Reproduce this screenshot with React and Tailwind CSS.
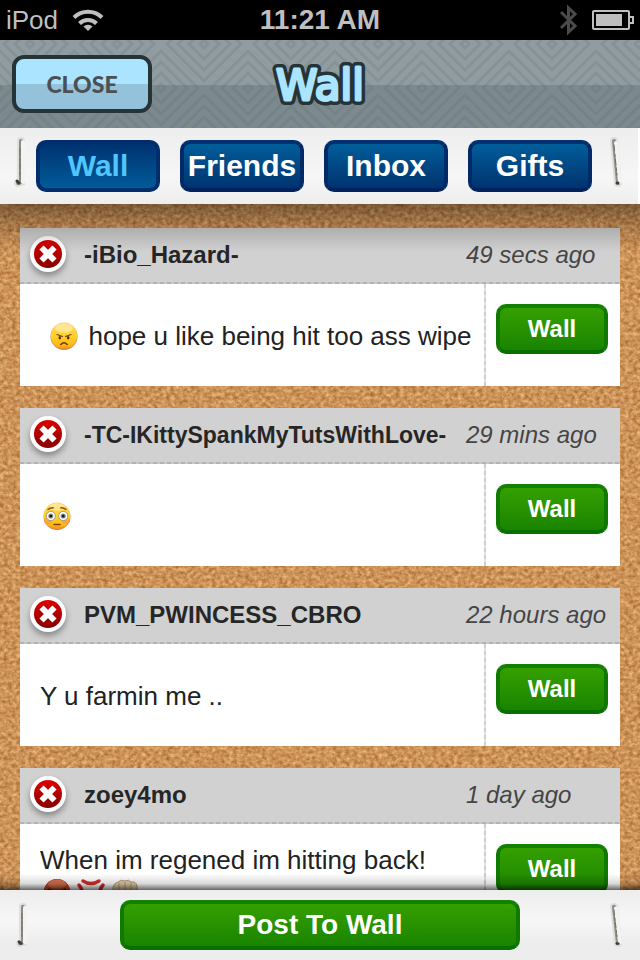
import React from "react";

function WifiIcon() {
  return (
    <svg width="32" height="24" viewBox="0 0 32 24" role="img" aria-label="Wi-Fi" fill="none" stroke="#bfbfbf" strokeWidth="4">
      <path d="M2 9.500A20 20 0 0 1 30 9.500" />
      <path d="M7.500 15.500A12 12 0 0 1 24.500 15.500" />
      <path d="M16 23L11.500 18.500A6.500 6.500 0 0 1 20.500 18.500Z" fill="#bfbfbf" stroke="none" />
    </svg>
  );
}

function BluetoothIcon() {
  return (
    <svg width="18" height="32" viewBox="0 0 18 32" role="img" aria-label="Bluetooth" fill="none" stroke="#4b4b4b" strokeWidth="3">
      <path d="M1 8L15 22L8.500 28V4L15 10L1 24" />
    </svg>
  );
}

function BatteryIcon() {
  return (
    <svg width="42" height="20" viewBox="0 0 42 20" role="img" aria-label="Battery">
      <rect x="1" y="1" width="36" height="18" rx="1" fill="none" stroke="#bfbfbf" strokeWidth="2" />
      <rect x="4" y="4" width="26" height="12" fill="#bfbfbf" />
      <path d="M38 7H41V13H38" fill="none" stroke="#bfbfbf" strokeWidth="2" />
    </svg>
  );
}

function HeaderPattern() {
  const rings = [4, 15, 26, 37];
  const centers = [
    [30, 4], [117, 4], [-13, 48], [74, 48], [30, 92], [117, 92],
  ];
  const diamond = (x, y, r) => `M${x - r} ${y}L${x} ${y - r}L${x + r} ${y}L${x} ${y + r}Z`;
  return (
    <svg className="absolute inset-0 h-full w-full" aria-hidden="true">
      <defs>
        <pattern id="diamonds" width="87" height="88" patternUnits="userSpaceOnUse">
          {centers.map(([x, y]) =>
            rings.map((r) => (
              <path key={`${x} ${y} ${r}`} d={diamond(x, y, r)} fill="none" stroke="#5d6c72" strokeOpacity="0.22" strokeWidth="3" />
            ))
          )}
        </pattern>
      </defs>
      <rect width="100%" height="100%" fill="url(#diamonds)" />
    </svg>
  );
}

function Cork() {
  return (
    <svg className="absolute inset-0 h-full w-full" aria-hidden="true">
      <filter id="cork" x="0" y="0" width="100%" height="100%" colorInterpolationFilters="sRGB">
        <feTurbulence type="fractalNoise" baseFrequency="0.24 0.28" numOctaves="3" seed="8" />
        <feColorMatrix values="0.34 0.12 0 0 0.570  0.42 0.12 0 0 0.305  0.42 0.12 0 0 0.075  0 0 0 0 1" />
      </filter>
      <rect width="100%" height="100%" filter="url(#cork)" />
    </svg>
  );
}

function Stitch({ lean, tall }) {
  const d = lean ? "M6 4L10 46" : "M9 4L9 45L6 46";
  return (
    <svg width="16" height={tall ? 50 : 44} viewBox="0 0 16 50" preserveAspectRatio="none" aria-hidden="true" fill="none" strokeLinecap="round">
      <path d={d} stroke="#dededc" strokeWidth="8" />
      <path d={d} stroke="#8b8d85" strokeWidth="4" />
      <path d={lean ? "M8 6L12 45" : "M11 5L11 45"} stroke="#f6f2f3" strokeWidth="4" />
      <path d={lean ? "M6 8L9 38" : "M8 12L8 40"} stroke="#6f7269" strokeWidth="1" strokeDasharray="6 3 3 2" />
      <path d={lean ? "M9 46L10 46" : "M5 44L7 46"} stroke="#3b3d35" strokeWidth="3" />
    </svg>
  );
}

function EmojiFrame({ label, children }) {
  return (
    <svg className="mx-[3px] inline-block align-[-5px]" width="28" height="28" viewBox="0 0 28 28" role="img" aria-label={label}>
      {children}
    </svg>
  );
}

function AngryFace() {
  return (
    <EmojiFrame label="Angry face">
      <circle cx="14" cy="14.500" r="13.500" fill="#c58a4a" />
      <circle cx="14" cy="13.800" r="13.200" fill="url(#skinYellow)" />
      <ellipse cx="14" cy="6" rx="9" ry="4.500" fill="#fff" opacity="0.4" />
      <path d="M7 12.500L12.500 14.500M21 12.500L15.500 14.500" stroke="#6b3b12" strokeWidth="1.200" strokeLinecap="round" />
      <ellipse cx="9.800" cy="15.800" rx="1.300" ry="1.800" fill="#5b300d" />
      <ellipse cx="18.200" cy="15.800" rx="1.300" ry="1.800" fill="#5b300d" />
      <path d="M10.800 22.500Q14 18.800 17.200 22.500" stroke="#6b3b12" strokeWidth="1.500" fill="none" strokeLinecap="round" />
    </EmojiFrame>
  );
}

function FlushedFace() {
  return (
    <EmojiFrame label="Flushed face">
      <circle cx="14" cy="14.500" r="13.500" fill="#c58a4a" />
      <circle cx="14" cy="13.800" r="13.200" fill="url(#skinYellow)" />
      <ellipse cx="14" cy="5" rx="8" ry="3.500" fill="#fff" opacity="0.4" />
      <ellipse cx="5" cy="19" rx="4" ry="3" fill="#ff8a4a" opacity="0.5" />
      <ellipse cx="23" cy="19" rx="4" ry="3" fill="#ff8a4a" opacity="0.5" />
      <path d="M5 7.500Q7 5.500 10.500 5.800M23 7.500Q21 5.500 17.500 5.800" stroke="#8a5418" strokeWidth="1.300" fill="none" strokeLinecap="round" />
      <circle cx="7.800" cy="14" r="4.600" fill="#fff" stroke="#a99a80" strokeWidth="1" />
      <circle cx="20.200" cy="14" r="4.600" fill="#fff" stroke="#a99a80" strokeWidth="1" />
      <circle cx="7.800" cy="14" r="2.600" fill="#8f9697" />
      <circle cx="20.200" cy="14" r="2.600" fill="#8f9697" />
      <circle cx="7.800" cy="14" r="1.500" fill="#1d1d1d" />
      <circle cx="20.200" cy="14" r="1.500" fill="#1d1d1d" />
      <path d="M11 22.500H17" stroke="#7d430f" strokeWidth="1.600" strokeLinecap="round" />
    </EmojiFrame>
  );
}

function RageFace() {
  return (
    <EmojiFrame label="Enraged face">
      <circle cx="14" cy="14.500" r="13.500" fill="#8f2a10" />
      <circle cx="14" cy="14" r="13" fill="url(#skinRed)" />
      <ellipse cx="14" cy="6" rx="9" ry="4.500" fill="#fff" opacity="0.2" />
      <path d="M6 11.500L12 14.500M22 11.500L16 14.500" stroke="#4b1304" strokeWidth="2" strokeLinecap="round" />
      <circle cx="9.500" cy="16" r="1.700" fill="#4b1304" />
      <circle cx="18.500" cy="16" r="1.700" fill="#4b1304" />
      <path d="M10 23Q14 19 18 23" stroke="#4b1304" strokeWidth="1.800" fill="none" />
    </EmojiFrame>
  );
}

function AngerMark() {
  return (
    <EmojiFrame label="Anger symbol">
      <g fill="none" stroke="#d42b2b" strokeWidth="3.500" strokeLinecap="round">
        <path d="M6 3Q14 8 22 3" />
        <path d="M2 7Q8 14 2 21" />
        <path d="M26 7Q20 14 26 21" />
        <path d="M6 26Q14 20 22 26" />
      </g>
    </EmojiFrame>
  );
}

function Fist() {
  return (
    <EmojiFrame label="Oncoming fist">
      <path d="M2 9Q3 5 7 4Q10 1 14 3Q18 1 20 4Q25 3 26 8L27 18Q25 25 19 26H8Q2 23 2 16Z" fill="#e0cba9" stroke="#b39b76" strokeWidth="1" />
      <path d="M8 5V13M14 4V13M20 5V13" stroke="#b39b76" strokeWidth="1" />
      <path d="M2 14Q8 17 14 14" stroke="#b39b76" strokeWidth="1" fill="none" />
    </EmojiFrame>
  );
}

function SharedGradients() {
  return (
    <svg className="absolute h-0 w-0" aria-hidden="true">
      <defs>
        <linearGradient id="skinYellow" x1="0" y1="0" x2="0" y2="1">
          <stop offset="0" stopColor="#ffd75a" />
          <stop offset="0.500" stopColor="#ffd22e" />
          <stop offset="0.850" stopColor="#fdb913" />
          <stop offset="1" stopColor="#f08a28" />
        </linearGradient>
        <linearGradient id="skinRed" x1="0" y1="0" x2="0" y2="1">
          <stop offset="0" stopColor="#c8502a" />
          <stop offset="1" stopColor="#c23a0e" />
        </linearGradient>
        <linearGradient id="deleteRed" x1="0" y1="0" x2="0" y2="1">
          <stop offset="0" stopColor="#de0000" />
          <stop offset="1" stopColor="#860000" />
        </linearGradient>
      </defs>
    </svg>
  );
}

function DeleteButton({ name }) {
  return (
    <button type="button" aria-label={`Delete post by ${name}`} className="mb-[2px] h-9 w-9 shrink-0 rounded-full bg-white shadow-[0_4px_6px_rgba(0,0,0,0.35)]">
      <svg width="36" height="36" viewBox="0 0 36 36" aria-hidden="true">
        <circle cx="18" cy="18" r="14" fill="url(#deleteRed)" />
        <path d="M11.500 11.500L24.500 24.500M24.500 11.500L11.500 24.500" stroke="#fff" strokeWidth="6" />
      </svg>
    </button>
  );
}

const posts = [
  { name: "-iBio_Hazard-", time: "49 secs ago", body: <>{"\u00a0"}<AngryFace /> hope u like being hit too ass wipe</> },
  { name: "-TC-IKittySpankMyTutsWithLove-", time: "29 mins ago", small: true, body: <FlushedFace /> },
  { name: "PVM_PWINCESS_CBRO", time: "22 hours ago", body: "Y u farmin me .." },
  { name: "zoey4mo", time: "1 day ago", body: <>When im regened im hitting back!<br /><RageFace /><AngerMark /><Fist /></> },
];

const tabs = ["Wall", "Friends", "Inbox", "Gifts"];

const greenButton =
  "rounded-[10px] border-4 border-t-[#138100] border-x-[#107a00] border-b-[#077000] bg-linear-to-b from-[#37a300] to-[#168100] bg-origin-border font-bold text-white";

function Post({ post }) {
  return (
    <li className="bg-white">
      <div className="flex h-[54px] items-center bg-[#d1d1d1] pl-[10px]">
        <DeleteButton name={post.name} />
        <h2 className={`min-w-0 flex-1 pl-[18px] font-bold whitespace-nowrap text-[#262626] ${post.small ? "text-[23px]" : "text-2xl"}`}>{post.name}</h2>
        <time className="w-[154px] shrink-0 text-2xl whitespace-nowrap text-[#454545] italic">{post.time}</time>
      </div>
      <div className="h-[2px] bg-[repeating-linear-gradient(90deg,#b3b3b3_0_4px,#c9c9c9_4px_7px)]" />
      <div className="flex h-[102px]">
        <div className="flex min-w-0 flex-1 items-center pt-[2px] pl-5">
          <p className="text-[26px] leading-8 text-[#222]">{post.body}</p>
        </div>
        <div className="w-[2px] bg-[repeating-linear-gradient(180deg,#cfcfcf_0_4px,#e2e2e2_4px_7px)]" />
        <div className="shrink-0 pt-5 pr-3 pl-[10px]">
          <button type="button" className={`h-[50px] w-28 text-2xl leading-none ${greenButton}`}>Wall</button>
        </div>
      </div>
    </li>
  );
}

export default function App() {
  return (
    <div className="flex h-screen flex-col overflow-hidden bg-black font-['Liberation_Sans',Arial,sans-serif]">
      <SharedGradients />
      <div className="grid h-10 shrink-0 grid-cols-[1fr_auto_1fr] items-center bg-black px-[6px] text-[#bfbfbf]">
        <div className="flex items-center gap-[14px]">
          <span className="text-[26px] leading-none">iPod</span>
          <WifiIcon />
        </div>
        <span className="text-[28px] leading-none font-bold">11:21 AM</span>
        <div className="flex items-center justify-end gap-[14px]">
          <BluetoothIcon />
          <BatteryIcon />
        </div>
      </div>

      <header className="relative grid h-[88px] shrink-0 grid-cols-[1fr_auto_1fr] items-center bg-linear-to-b from-[#919ca0] from-51% to-[#7c898e] to-51% px-3">
        <HeaderPattern />
        <div className="relative">
          <button type="button" className="h-[58px] w-[140px] rounded-[12px] border-4 border-[#263437] bg-linear-to-b from-[#aae4ff] from-50% to-[#93c2da] to-50% font-['Lato',sans-serif] text-[23px] leading-none font-black text-[#4c5052]">
            CLOSE
          </button>
        </div>
        <h1 className="relative">
          <svg width="104" height="56" viewBox="0 0 104 56" className="block">
            <g fontFamily="DejaVu Sans, Verdana, sans-serif" fontSize="42" textAnchor="middle" strokeLinejoin="round">
              <text x="52" y="44" fill="#aae4ff" stroke="#263437" strokeWidth="10" aria-hidden="true">Wall</text>
              <text x="52" y="44" fill="#aae4ff" stroke="#aae4ff" strokeWidth="3">Wall</text>
            </g>
          </svg>
        </h1>
        <div />
      </header>

      <div className="flex h-[76px] shrink-0 items-center border-r-2 border-white bg-linear-to-b from-[#eeeeee] via-[#f6f6f6] via-65% to-[#eeeeee]">
        <div className="w-9 shrink-0 pb-2 pl-3">
          <Stitch tall />
        </div>
        <nav className="flex flex-1 gap-5">
          {tabs.map((tab) => (
            <button
              key={tab}
              type="button"
              aria-current={tab === "Wall" ? "page" : undefined}
              className={`h-[52px] min-w-0 flex-1 rounded-[10px] border-4 bg-linear-to-b bg-origin-border text-[30px] leading-none font-bold ${
                tab === "Wall"
                  ? "border-[#002d6b] from-[#002f6f] to-[#005f9c] text-[#50c5ff]"
                  : "border-t-[#00306d] border-x-[#002b68] border-b-[#002360] from-[#00629e] to-[#002f6c] text-white"
              }`}
            >
              {tab}
            </button>
          ))}
        </nav>
        <div className="w-[46px] shrink-0 pb-2 pl-4">
          <Stitch lean tall />
        </div>
      </div>

      <main className="relative min-h-0 flex-1 overflow-hidden">
        <Cork />
        <ul className="relative flex flex-col gap-[22px] px-5 pt-6">
          {posts.map((post) => (
            <Post key={post.name} post={post} />
          ))}
        </ul>
        <div className="pointer-events-none absolute inset-x-0 top-0 h-12 bg-linear-to-b from-black/40 via-black/20 via-40% to-transparent" />
        <div className="pointer-events-none absolute inset-x-0 bottom-0 h-4 bg-linear-to-b from-transparent via-black/15 via-60% to-black/60" />
      </main>

      <footer className="flex h-[70px] shrink-0 items-center bg-linear-to-b from-[#ededed] via-[#f7f7f7] via-45% to-[#ededed] to-75%">
        <div className="w-[120px] shrink-0 pl-[14px]">
          <Stitch />
        </div>
        <button type="button" className={`h-[50px] flex-1 text-[28px] leading-none ${greenButton}`}>Post To Wall</button>
        <div className="flex w-[120px] shrink-0 justify-end pr-4">
          <Stitch lean />
        </div>
      </footer>
    </div>
  );
}
